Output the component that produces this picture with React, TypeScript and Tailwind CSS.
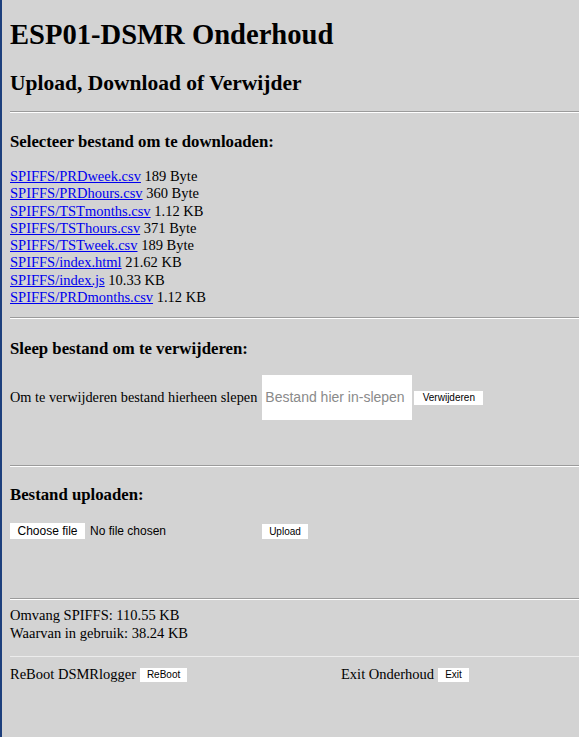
import React from "react";

const Hr = () => (
  <div className="h-0 border-t border-t-[#9b9b9b] border-b border-b-white" />
);

const files: [string, string][] = [
  ["SPIFFS/PRDweek.csv", "189 Byte"],
  ["SPIFFS/PRDhours.csv", "360 Byte"],
  ["SPIFFS/TSTmonths.csv", "1.12 KB"],
  ["SPIFFS/TSThours.csv", "371 Byte"],
  ["SPIFFS/TSTweek.csv", "189 Byte"],
  ["SPIFFS/index.html", "21.62 KB"],
  ["SPIFFS/index.js", "10.33 KB"],
  ["SPIFFS/PRDmonths.csv", "1.12 KB"],
];

const sans = "font-['Liberation_Sans',Arial,sans-serif]";

export default function App() {
  return (
    <div className="min-h-[737px] bg-[#d3d3d3] border-l-2 border-l-[#1d3f7c] pl-2 text-black font-['Liberation_Serif','Times_New_Roman',serif] text-[14.5px]">
      <h1 className="pt-[19px] text-[28.6px] leading-[32px] font-bold">ESP01-DSMR Onderhoud</h1>
      <h2 className="mt-[20px] text-[21.5px] leading-[24px] font-bold">Upload, Download of Verwijder</h2>
      <div className="mt-[16px]">
        <Hr />
      </div>
      <h3 className="mt-[19px] text-[16.75px] leading-[20px] font-bold">Selecteer bestand om te downloaden:</h3>
      <div className="mt-[16px] leading-[17.3px]">
        {files.map(([f, s]) => (
          <div key={f}>
            <a href="#" className="text-[#0000ee] underline">{f}</a> {s}
          </div>
        ))}
      </div>
      <div className="mt-[11px]">
        <Hr />
      </div>
      <h3 className="mt-[20px] text-[16.75px] leading-[20px] font-bold">Sleep bestand om te verwijderen:</h3>
      <div className="mt-[16px] flex items-center">
        <span className="text-[14.3px]">Om te verwijderen bestand hierheen slepen</span>
        <div className={`ml-[5px] w-[150px] h-[45px] bg-white flex items-center pl-[3px] text-[14px] text-[#8a8a8a] ${sans}`}>
          Bestand hier in-slepen
        </div>
        <button className={`ml-[2px] h-[14px] w-[69px] bg-white text-[10px] leading-[14px] text-black ${sans}`}>
          Verwijderen
        </button>
      </div>
      <div className="mt-[45px]">
        <Hr />
      </div>
      <h3 className="mt-[18px] text-[16.75px] leading-[20px] font-bold">Bestand uploaden:</h3>
      <div className={`mt-[17px] flex items-center ${sans}`}>
        <div className="w-[252px] flex items-center">
          <button className="h-[16px] w-[75px] bg-white text-[12px] leading-[16px] text-black">Choose file</button>
          <span className="ml-[5px] text-[12px]">No file chosen</span>
        </div>
        <button className="h-[15px] w-[46px] bg-white text-[10px] leading-[15px] text-black">Upload</button>
      </div>
      <div className="mt-[58px]">
        <Hr />
      </div>
      <div className="mt-[6px] leading-[18px]">
        <div>Omvang SPIFFS: 110.55 KB</div>
        <div>Waarvan in gebruik: 38.24 KB</div>
      </div>
      <div className="mt-[14px] border-t border-t-[#ececec]" />
      <div className="mt-[7px] flex items-center">
        <div className="w-[331px] flex items-center">
          <span>ReBoot DSMRlogger</span>
          <button className={`ml-[4px] h-[14px] w-[47px] bg-white text-[10px] leading-[14px] text-black ${sans}`}>ReBoot</button>
        </div>
        <div className="flex items-center">
          <span>Exit Onderhoud</span>
          <button className={`ml-[4px] h-[14px] w-[31px] bg-white text-[10px] leading-[14px] text-black ${sans}`}>Exit</button>
        </div>
      </div>
    </div>
  );
}
